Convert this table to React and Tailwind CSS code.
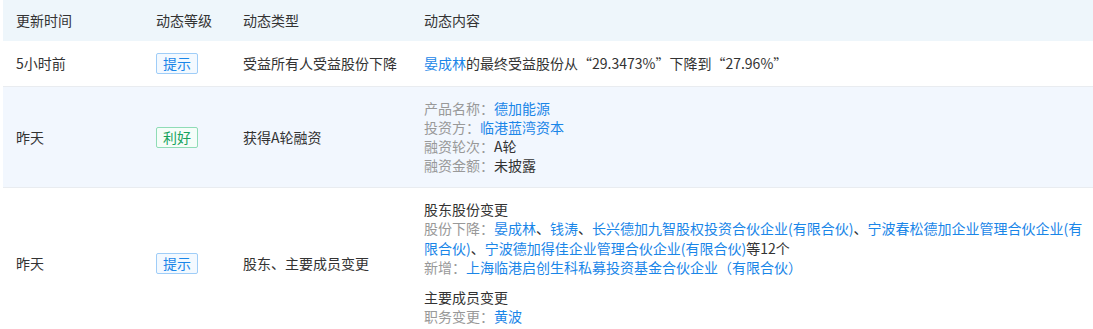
const font = { fontFamily: '"Noto Sans CJK SC", "Noto Sans", sans-serif' }

function Tag({ kind }) {
  if (kind === 'good') {
    return (
      <span className="inline-block h-[21px] rounded-[2px] border border-[#8fdcb6] bg-[#f5fdf9] px-[6px] text-[14px] leading-[19px] text-[#17a35e]">
        利好
      </span>
    )
  }
  return (
    <span className="inline-block h-[21px] rounded-[2px] border border-[#9fcdf8] bg-[#f3f9ff] px-[6px] text-[14px] leading-[19px] text-[#1a86e8]">
      提示
    </span>
  )
}

function Link({ children }) {
  return <span className="text-[#1a86e8]">{children}</span>
}

function Label({ children }) {
  return <span className="text-[#999999]">{children}</span>
}

function Row({ time, level, type, bg, children }) {
  return (
    <tr className={`border-b border-[#e9ecf0] ${bg}`}>
      <td className="py-3 pl-[13px] pr-3 align-middle">{time}</td>
      <td className="py-3 pl-3 pr-3 align-middle">
        <Tag kind={level} />
      </td>
      <td className="py-3 pl-3 pr-3 align-middle">{type}</td>
      <td className="py-3 pl-3 pr-[10px] align-middle">{children}</td>
    </tr>
  )
}

export default function App() {
  return (
    <div className="min-h-[329px] bg-white pl-[3px] text-[14px] leading-[19px] text-[#333333]" style={font}>
      <table className="w-full table-fixed border-collapse">
        <colgroup>
          <col className="w-[141px]" />
          <col className="w-[87px]" />
          <col className="w-[181px]" />
          <col />
        </colgroup>
        <thead>
          <tr className="h-[41px] bg-[#eef6fb] text-left">
            <th className="pl-[13px] font-normal">更新时间</th>
            <th className="pl-3 font-normal">动态等级</th>
            <th className="pl-3 font-normal">动态类型</th>
            <th className="pl-3 font-normal">动态内容</th>
          </tr>
        </thead>
        <tbody>
          <Row time="5小时前" level="tip" type="受益所有人受益股份下降" bg="bg-white">
            <Link>晏成林</Link>的最终受益股份从“29.3473%”下降到“27.96%”
          </Row>
          <Row time="昨天" level="good" type="获得A轮融资" bg="bg-[#f2f7fe]">
            <div>
              <Label>产品名称：</Label>
              <Link>德加能源</Link>
            </div>
            <div>
              <Label>投资方：</Label>
              <Link>临港蓝湾资本</Link>
            </div>
            <div>
              <Label>融资轮次：</Label>A轮
            </div>
            <div>
              <Label>融资金额：</Label>未披露
            </div>
          </Row>
          <Row time="昨天" level="tip" type="股东、主要成员变更" bg="bg-white">
            <div className="flex flex-col gap-[10px] leading-[19.4px]">
              <div>
                <div>股东股份变更</div>
                <div>
                  <Label>股份下降：</Label>
                  <Link>晏成林</Link>、<Link>钱涛</Link>、
                  <Link>长兴德加九智股权投资合伙企业(有限合伙)</Link>、
                  <Link>宁波春松德加企业管理合伙企业(有限合伙)</Link>、
                  <Link>宁波德加得佳企业管理合伙企业(有限合伙)</Link>等12个
                </div>
                <div>
                  <Label>新增：</Label>
                  <Link>上海临港启创生科私募投资基金合伙企业（有限合伙）</Link>
                </div>
              </div>
              <div>
                <div>主要成员变更</div>
                <div>
                  <Label>职务变更：</Label>
                  <Link>黄波</Link>
                </div>
              </div>
            </div>
          </Row>
        </tbody>
      </table>
    </div>
  )
}
